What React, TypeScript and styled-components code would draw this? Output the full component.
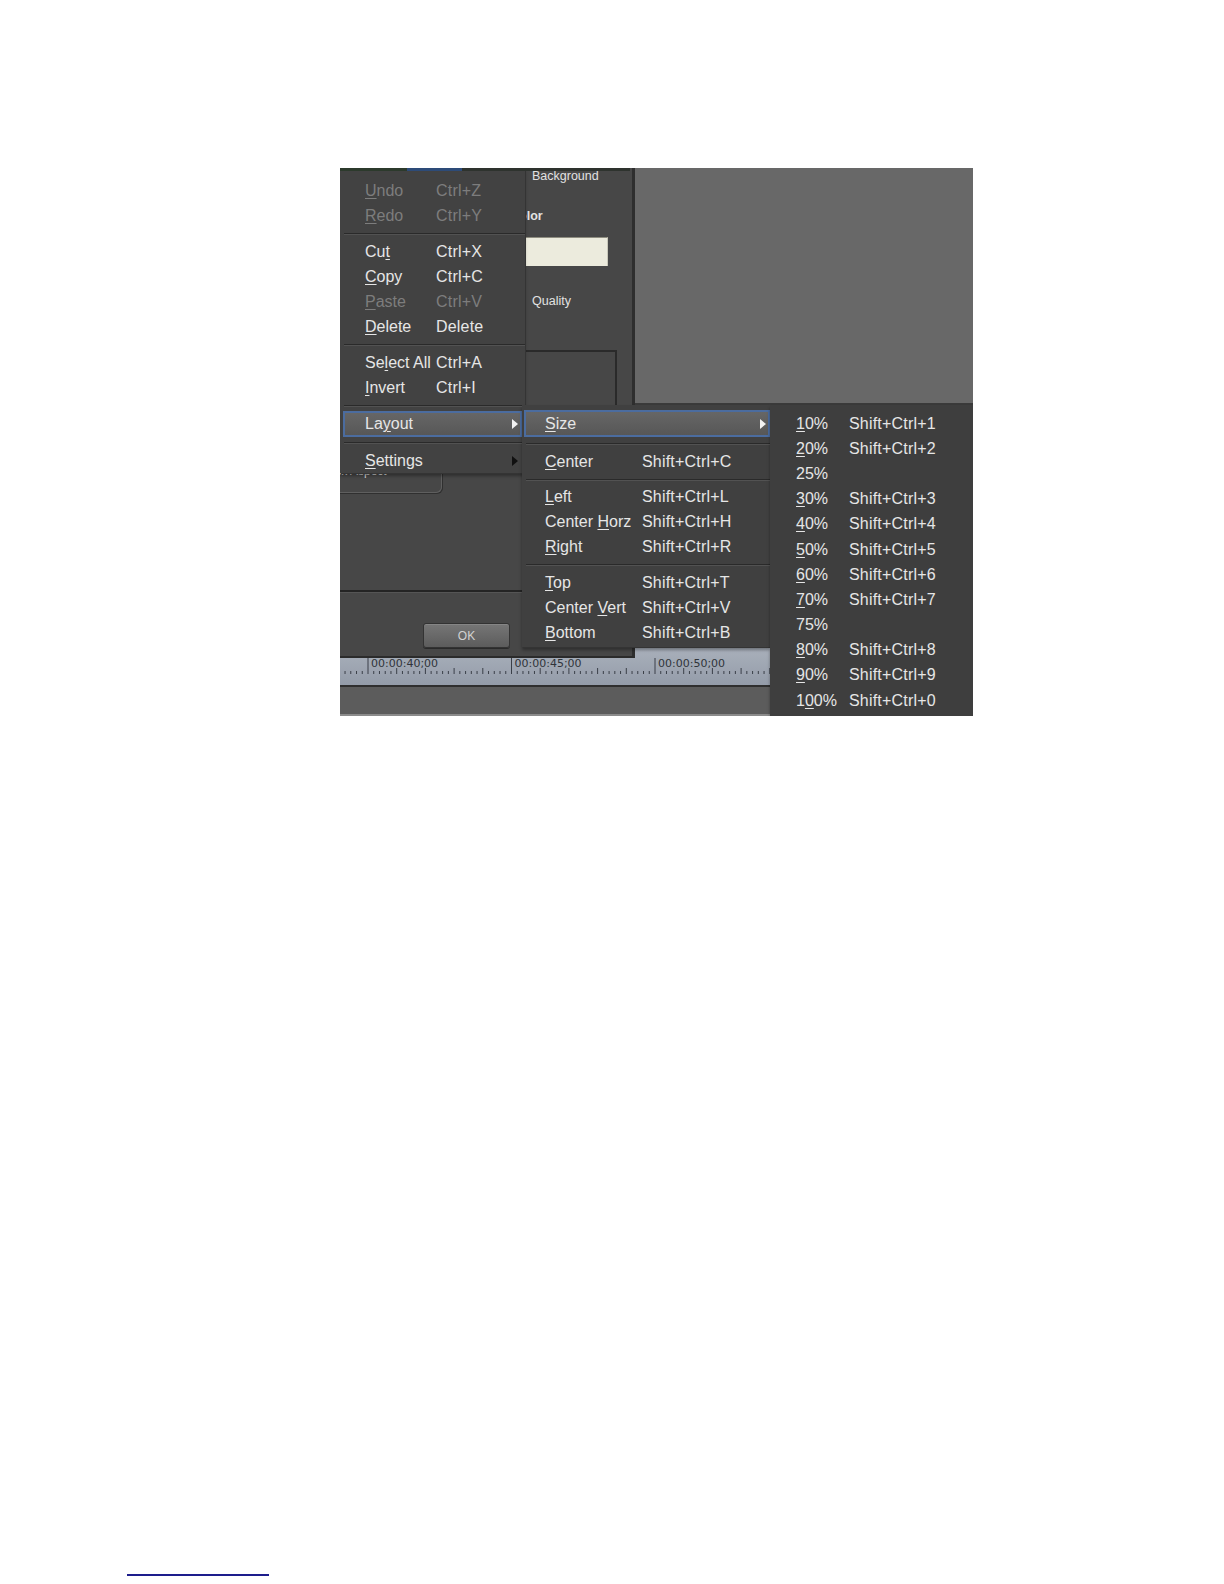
import React from "react";
import styled, { createGlobalStyle } from "styled-components";

const GlobalStyle = createGlobalStyle`
  html, body {
    margin: 0;
    padding: 0;
    background: #ffffff;
  }
  body {
    font-family: "Liberation Sans", Arial, sans-serif;
  }
`;

// mnemonic labels: "&" marks the underlined letter
const label = (text: string) => {
  const i = text.indexOf("&");
  if (i < 0) return text;
  return (
    <>
      {text.slice(0, i)}
      <u>{text.charAt(i + 1)}</u>
      {text.slice(i + 2)}
    </>
  );
};

type Item =
  | { sep: number }
  | { text: string; keys?: string; off?: boolean; active?: boolean; sub?: "light" | "dark"; h?: number };

type MenuCfg = { ml: number; mr: number; pad: number; col: number; h: number };

const editItems: Item[] = [
  { text: "&Undo", keys: "Ctrl+Z", off: true },
  { text: "&Redo", keys: "Ctrl+Y", off: true },
  { sep: 11 },
  { text: "Cu&t", keys: "Ctrl+X" },
  { text: "&Copy", keys: "Ctrl+C" },
  { text: "&Paste", keys: "Ctrl+V", off: true },
  { text: "&Delete", keys: "Delete" },
  { sep: 11 },
  { text: "Se&lect All", keys: "Ctrl+A" },
  { text: "&Invert", keys: "Ctrl+I" },
  { sep: 11 },
  { text: "La&yout", active: true, sub: "light", h: 26 },
  { sep: 11 },
  { text: "&Settings", sub: "dark" },
];

const layoutItems: Item[] = [
  { text: "&Size", active: true, sub: "light", h: 27 },
  { sep: 12 },
  { text: "&Center", keys: "Shift+Ctrl+C" },
  { sep: 10 },
  { text: "&Left", keys: "Shift+Ctrl+L" },
  { text: "Center &Horz", keys: "Shift+Ctrl+H" },
  { text: "&Right", keys: "Shift+Ctrl+R" },
  { sep: 11 },
  { text: "&Top", keys: "Shift+Ctrl+T" },
  { text: "Center &Vert", keys: "Shift+Ctrl+V" },
  { text: "&Bottom", keys: "Shift+Ctrl+B" },
];

const sizeItems: Item[] = [
  { text: "&10%", keys: "Shift+Ctrl+1" },
  { text: "&20%", keys: "Shift+Ctrl+2" },
  { text: "25%" },
  { text: "&30%", keys: "Shift+Ctrl+3" },
  { text: "&40%", keys: "Shift+Ctrl+4" },
  { text: "&50%", keys: "Shift+Ctrl+5" },
  { text: "&60%", keys: "Shift+Ctrl+6" },
  { text: "&70%", keys: "Shift+Ctrl+7" },
  { text: "75%" },
  { text: "&80%", keys: "Shift+Ctrl+8" },
  { text: "&90%", keys: "Shift+Ctrl+9" },
  { text: "1&00%", keys: "Shift+Ctrl+0" },
];

const MENU1: MenuCfg = { ml: 3, mr: 3, pad: 25, col: 71, h: 25 };
const MENU2: MenuCfg = { ml: 2, mr: 0, pad: 23, col: 97, h: 25 };
const MENU3: MenuCfg = { ml: 2, mr: 2, pad: 26, col: 53, h: 25.2 };

const Page = styled.div`
  display: flex;
  flex-direction: column;
  width: 1224px;
  height: 1584px;
  padding-top: 168px;
  box-sizing: border-box;
`;

const Shot = styled.div`
  position: relative;
  margin-left: 340px;
  width: 633px;
  height: 548px;
  overflow: hidden;
  background: #474747;
  font-family: "Liberation Sans", Arial, sans-serif;
`;

const FootRule = styled.div`
  margin: 858px 0 0 127px;
  width: 142px;
  height: 2px;
  background: #1d1d8c;
`;

/* ---------- application behind the dialog ---------- */

const Workspace = styled.div`
  display: flex;
  flex-direction: column;
  height: 100%;
`;

const Viewer = styled.div`
  height: 237px;
  background: #686868;
  box-shadow: inset 0 -2px 0 #3a3a3a;
`;

const Lower = styled.div`
  height: 243px;
  background: #3d3d3d;
`;

const RulerBar = styled.div`
  height: 39px;
  box-sizing: border-box;
  background: linear-gradient(#a9b0bb, #949ca9);
  border-bottom: 2px solid #2f2f2f;

  svg {
    display: block;
  }
`;

const TrackArea = styled.div`
  flex: 1;
  background: #5c5c5c;
  border-bottom: 2px solid #8b8b8b;
`;

/* ---------- the dialog ---------- */

const Dialog = styled.div`
  position: absolute;
  left: 0;
  top: 0;
  width: 295px;
  height: 490px;
  box-sizing: border-box;
  display: flex;
  flex-direction: column;
  background: #474747;
  border-right: 3px solid #2e2e2e;
  border-bottom: 2px solid #2b2b2b;
  color: #e2e2e2;
  font-size: 12.5px;
`;

const FieldLabel = styled.div<{ $top: number; $left: number; $bold?: boolean }>`
  margin: ${(p) => p.$top}px 0 0 ${(p) => p.$left}px;
  line-height: 14px;
  font-weight: ${(p) => (p.$bold ? 700 : 400)};
  white-space: nowrap;
`;

const ColorField = styled.div`
  margin: 14px 0 0 160px;
  width: 108px;
  height: 29px;
  box-sizing: border-box;
  background: #ecebdd;
  border-top: 1px solid #8e8d80;
  border-right: 1px solid #c9c8ba;
`;

const GroupFrame = styled.div`
  margin: 42px 0 0 60px;
  width: 217px;
  height: 92px;
  box-sizing: border-box;
  border: 2px solid #2a2a2a;
  border-bottom-color: #555;
`;

const LockButton = styled.div`
  margin: 10px 0 0 -40px;
  width: 142px;
  height: 41px;
  box-sizing: border-box;
  padding: 13px 0 0 21px;
  border: 1px solid #5f5f5f;
  border-top: none;
  border-radius: 0 0 6px 0;
  box-shadow: 1px 1px 0 #303030;
  font-size: 12px;
  line-height: 12px;
  color: #d8d8d8;
  white-space: nowrap;
`;

const Divider = styled.div`
  margin-top: 97px;
  height: 2px;
  background: #242424;
  box-shadow: 0 1px 0 #555;
`;

const OkButton = styled.div`
  margin: 31px 0 0 83px;
  width: 87px;
  height: 25px;
  box-sizing: border-box;
  display: flex;
  align-items: center;
  justify-content: center;
  border: 1px solid #333;
  border-radius: 3px;
  background: linear-gradient(#767676, #5c5c5c);
  box-shadow: 0 1px 0 #2a2a2a, inset 0 1px 0 #858585;
  color: #d2d2d2;
  font-size: 12px;
`;

/* ---------- menus ---------- */

const Menu = styled.div<{ $left: number; $top: number; $w: number; $h: number; $bg: string; $padTop: number }>`
  position: absolute;
  left: ${(p) => p.$left}px;
  top: ${(p) => p.$top}px;
  width: ${(p) => p.$w}px;
  height: ${(p) => p.$h}px;
  box-sizing: border-box;
  padding-top: ${(p) => p.$padTop}px;
  background: ${(p) => p.$bg};
  box-shadow: 1px 1px 0 #343434, 0 3px 3px rgba(0, 0, 0, 0.35);
`;

const TopStrip = styled.div`
  position: absolute;
  left: 0;
  top: 0;
  width: 290px;
  height: 3px;
  background: linear-gradient(90deg, #2c3a2c 0 23%, #2d4b78 23% 42%, #2e332e 42%);
`;

const Row = styled.div<{ $cfg: MenuCfg; $h: number; $active?: boolean; $off?: boolean }>`
  display: grid;
  grid-template-columns: ${(p) => p.$cfg.col}px 1fr auto;
  align-items: center;
  box-sizing: border-box;
  height: ${(p) => p.$h}px;
  margin: 0 ${(p) => p.$cfg.mr}px 0 ${(p) => p.$cfg.ml}px;
  padding: 0 2px 0 ${(p) => p.$cfg.pad - p.$cfg.ml - 2}px;
  border: 2px solid ${(p) => (p.$active ? "#4b6c9f" : "transparent")};
  background: ${(p) => (p.$active ? "linear-gradient(#666666, #575757)" : "transparent")};
  color: ${(p) => (p.$off ? "#7d7d7d" : "#e6e6e6")};
  font-size: 16px;
  line-height: 18px;
  white-space: nowrap;

  u {
    text-decoration-thickness: 1px;
    text-underline-offset: 2px;
  }
`;

const Keys = styled.span`
  letter-spacing: 0.2px;
`;

const SubArrow = styled.span<{ $dark?: boolean }>`
  width: 0;
  height: 0;
  border-left: 6px solid ${(p) => (p.$dark ? "#101010" : "#f2f2f2")};
  border-top: 5px solid transparent;
  border-bottom: 5px solid transparent;
`;

const Sep = styled.div<{ $h: number }>`
  height: ${(p) => p.$h}px;
  display: flex;
  align-items: center;
  margin-left: 4px;

  &::after {
    content: "";
    flex: 1;
    height: 1px;
    background: #2a2a2a;
    box-shadow: 0 1px 0 #525252;
  }
`;

const MenuItems = ({ items, cfg }: { items: Item[]; cfg: MenuCfg }) => (
  <>
    {items.map((it, i) =>
      "sep" in it ? (
        <Sep key={i} $h={it.sep} />
      ) : (
        <Row key={i} $cfg={cfg} $h={it.h ?? cfg.h} $active={it.active} $off={it.off}>
          <span>{label(it.text)}</span>
          <Keys>{it.keys ?? ""}</Keys>
          {it.sub ? <SubArrow $dark={it.sub === "dark"} /> : <span />}
        </Row>
      )
    )}
  </>
);

const TimeRuler = () => {
  const step = 143.5;
  const minor = step / 25;
  const start = 28 - step;
  const ticks: React.ReactNode[] = [];
  for (let n = 0; start + n * minor < 440; n++) {
    const x = start + n * minor;
    if (x < 0) continue;
    const major = n % 25 === 0;
    const mid = n % 5 === 0;
    const y1 = major ? 10 : mid ? 20 : 23;
    ticks.push(<line key={n} x1={x} x2={x} y1={y1} y2={26} stroke="#3a3f48" strokeWidth={1} />);
  }
  const labels = ["00:00:40;00", "00:00:45;00", "00:00:50;00"];
  return (
    <svg width="440" height="37" viewBox="0 0 440 37">
      {ticks}
      {labels.map((t, i) => (
        <text
          key={t}
          x={28 + i * step + 3}
          y={19}
          fontFamily="'DejaVu Sans', sans-serif"
          fontSize="11"
          fill="#30343a"
        >
          {t}
        </text>
      ))}
    </svg>
  );
};

const App = () => {
  return (
    <>
      <GlobalStyle />
      <Page>
        <Shot>
          <Workspace>
            <Viewer />
            <Lower />
            <RulerBar>
              <TimeRuler />
            </RulerBar>
            <TrackArea />
          </Workspace>

          <Dialog>
            <FieldLabel $top={1} $left={192}>
              Background
            </FieldLabel>
            <FieldLabel $top={26} $left={170} $bold>
              Color
            </FieldLabel>
            <ColorField />
            <FieldLabel $top={28} $left={192}>
              Quality
            </FieldLabel>
            <GroupFrame />
            <LockButton>Lock Aspect</LockButton>
            <Divider />
            <OkButton>OK</OkButton>
          </Dialog>

          <Menu $left={0} $top={0} $w={185} $h={305} $bg="#424242" $padTop={10}>
            <MenuItems items={editItems} cfg={MENU1} />
          </Menu>
          <Menu $left={182} $top={237} $w={248} $h={242} $bg="#404040" $padTop={5}>
            <MenuItems items={layoutItems} cfg={MENU2} />
          </Menu>
          <Menu $left={430} $top={237} $w={203} $h={320} $bg="#3e3e3e" $padTop={6}>
            <MenuItems items={sizeItems} cfg={MENU3} />
          </Menu>
          <TopStrip />
        </Shot>
        <FootRule />
      </Page>
    </>
  );
};

export default App;
